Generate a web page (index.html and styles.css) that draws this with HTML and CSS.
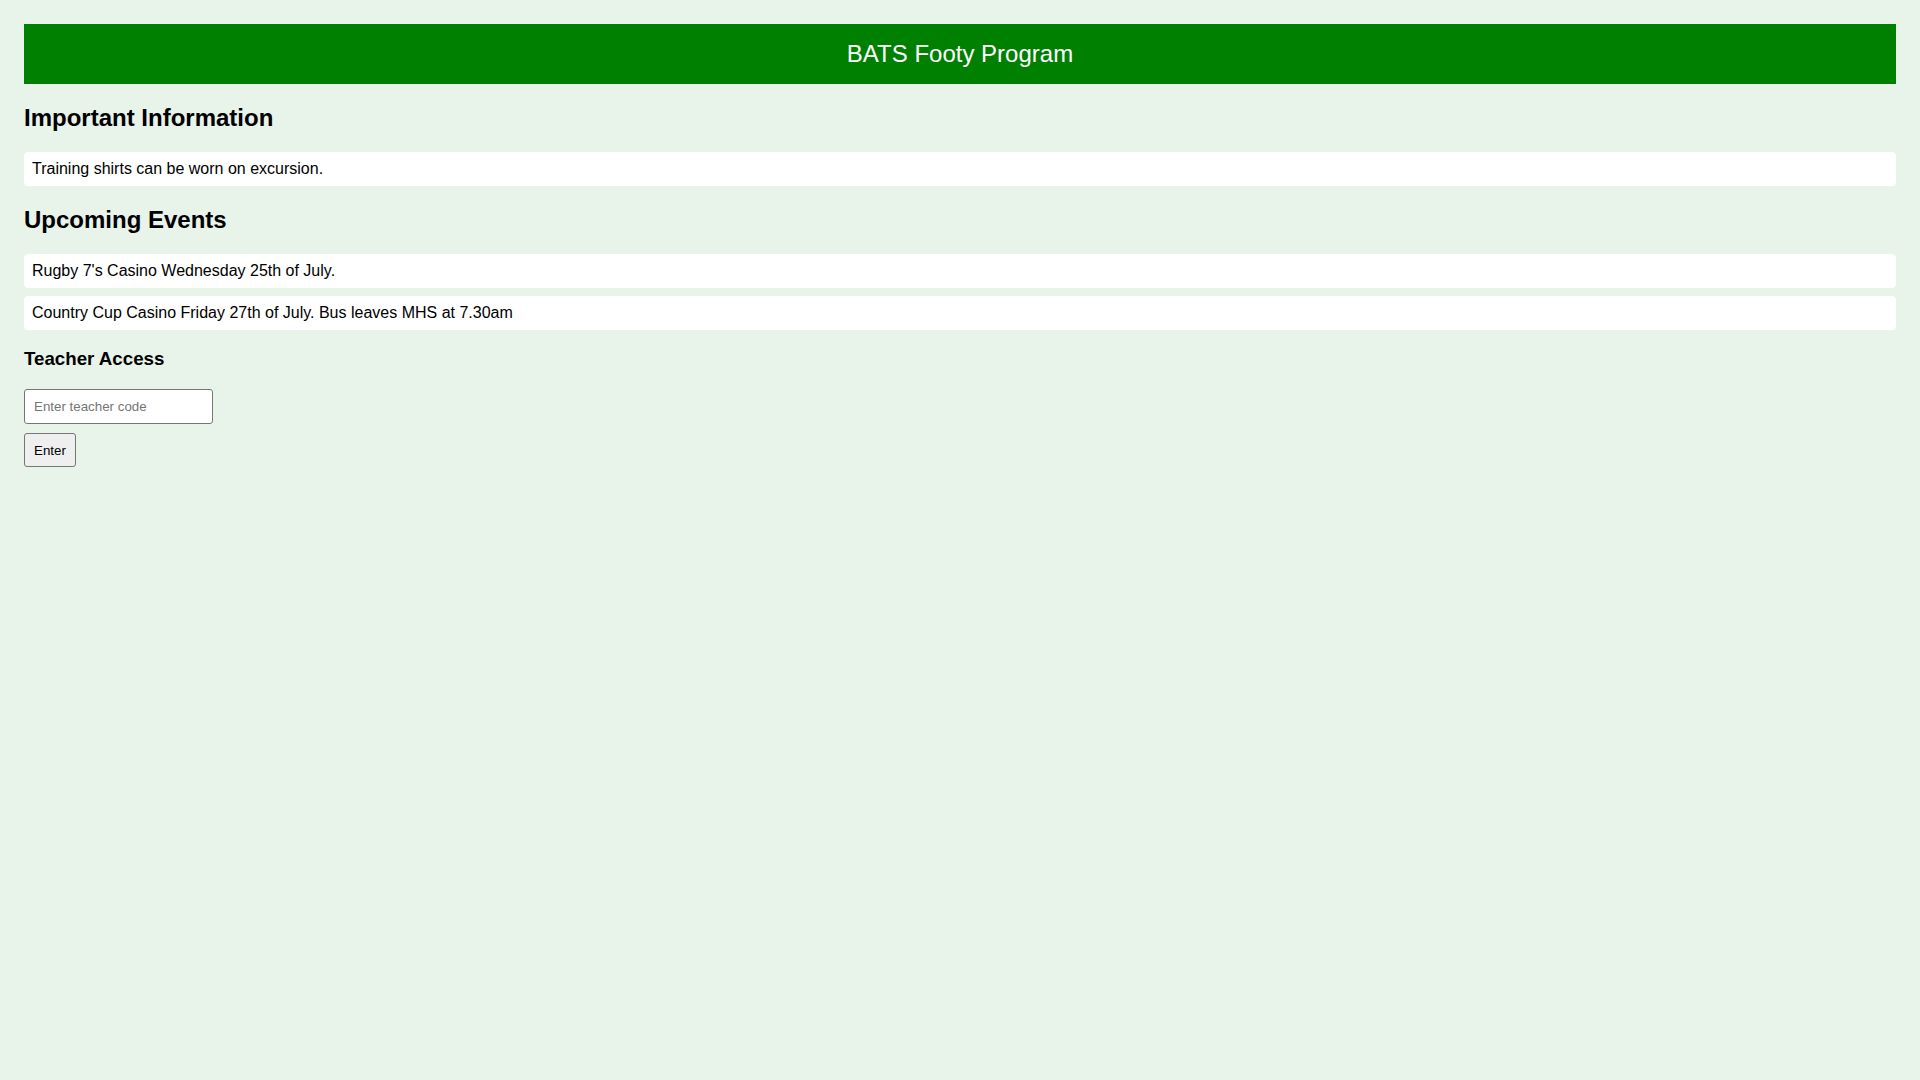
FILE: index.html
```html
<!DOCTYPE html>
<html lang="en">

<head>
  <meta charset="UTF-8">
  <meta name="viewport" content="width=device-width, initial-scale=1.0">
  <title>BATS Footy Program</title>
  <link rel="stylesheet" href="styles.css">
</head>

<body>
  <header id="banner">BATS Footy Program</header>

  <h2>Important Information</h2>
  <div class="notice">Training shirts can be worn on excursion.</div>

  <h2>Upcoming Events</h2>
  <div class="notice">Rugby 7's Casino Wednesday 25th of July.</div>
  <div class="notice">Country Cup Casino Friday 27th of July. Bus leaves MHS at 7.30am</div>

  <h3>Teacher Access</h3>
  <form id="teacher-form">
    <input type="password" name="code" id="code" placeholder="Enter teacher code" />
    <button type="button">Enter</button>
  </form>
</body>

</html>
```

FILE: styles.css
```css
body {
  margin: 0;
  padding: 24px;
  background-color: #e8f3e9;
  font-family: "Liberation Sans", Arial, sans-serif;
  color: #000;
}

#banner {
  background-color: green;
  color: white;
  text-align: center;
  font-size: 24px;
  padding: 16px;
}

h2 {
  font-size: 24px;
  margin: 0.83em 0;
}

h3 {
  font-size: 18.72px;
  margin: 1em 0;
}

.notice {
  background-color: white;
  border-radius: 4px;
  padding: 8px;
  margin-bottom: 8px;
  font-size: 16px;
}

#teacher-form input,
#teacher-form button {
  display: block;
  font-family: "Liberation Sans", Arial, sans-serif;
  font-size: 13.33px;
  border: 1px solid #767676;
  border-radius: 3px;
  padding: 9px;
  margin: 0 0 9px 0;
}

#teacher-form input {
  width: 189px;
  box-sizing: border-box;
  background: white;
}

#teacher-form input::placeholder {
  color: #757575;
}

#teacher-form button {
  padding: 8.5px 9px;
  background: #efefef;
  color: black;
}
```
